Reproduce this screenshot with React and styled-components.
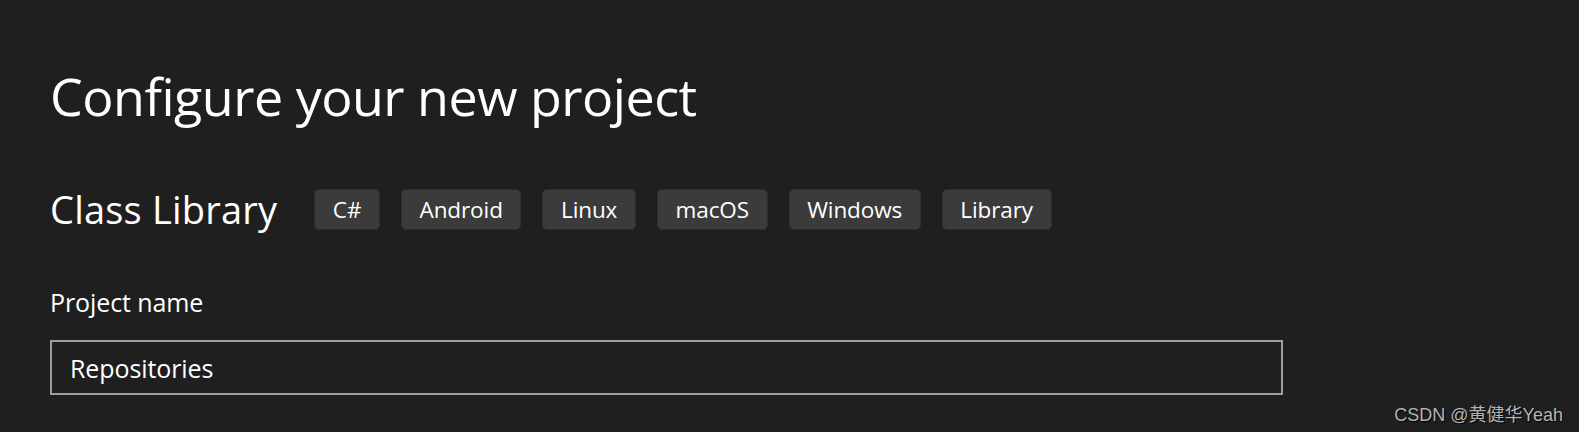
import React from "react";
import styled, { createGlobalStyle } from "styled-components";

const Global = createGlobalStyle`
  html, body { margin: 0; padding: 0; background: #1f1f1f; }
  body { font-family: "Open Sans", "Noto Sans", sans-serif; color: #ffffff; }
`;

const Page = styled.div`
  position: relative;
  width: 1579px;
  height: 432px;
  box-sizing: border-box;
  padding: 60px 0 0 50px;
  background: #1f1f1f;
  overflow: hidden;
`;

const Title = styled.h1`
  margin: 0;
  font-weight: 400;
  font-size: 52px;
  line-height: 72px;
  letter-spacing: -0.5px;
`;

const TemplateRow = styled.div`
  display: flex;
  align-items: center;
  gap: 21px;
  margin-top: 53px;
`;

const TemplateName = styled.h2`
  margin: 0 16px 0 0;
  font-weight: 400;
  font-size: 38px;
  line-height: 48px;
  letter-spacing: 0.2px;
`;

const Tag = styled.span`
  display: inline-flex;
  align-items: center;
  height: 41px;
  box-sizing: border-box;
  padding: 0 17.6px;
  border-radius: 5px;
  background: #3b3b3b;
  border: 1px solid #2e2e2e;
  font-size: 22.5px;
  letter-spacing: -0.1px;
`;

const Label = styled.div`
  margin-top: 53px;
  font-size: 25px;
  line-height: 32px;
  letter-spacing: -0.1px;
`;

const Input = styled.div`
  margin-top: 22px;
  width: 1233px;
  height: 55px;
  box-sizing: border-box;
  border: 2px solid #9d9d9d;
  display: flex;
  align-items: center;
  padding-left: 18px;
  font-size: 25px;
  letter-spacing: -0.1px;
`;

const Watermark = styled.div`
  position: absolute;
  right: 16px;
  bottom: 6px;
  font-family: "Liberation Sans", "Noto Sans CJK SC", sans-serif;
  font-size: 18px;
  color: #b4b4b4;
  text-shadow: 1px 1px 1px #000;
`;

const tags = ["C#", "Android", "Linux", "macOS", "Windows", "Library"];

export default function App() {
  return (
    <>
      <Global />
      <Page>
        <Title>Configure your new project</Title>
        <TemplateRow>
          <TemplateName>Class Library</TemplateName>
          {tags.map((t) => (
            <Tag key={t}>{t}</Tag>
          ))}
        </TemplateRow>
        <Label>Project name</Label>
        <Input>Repositories</Input>
        <Watermark>CSDN @黄健华Yeah</Watermark>
      </Page>
    </>
  );
}
